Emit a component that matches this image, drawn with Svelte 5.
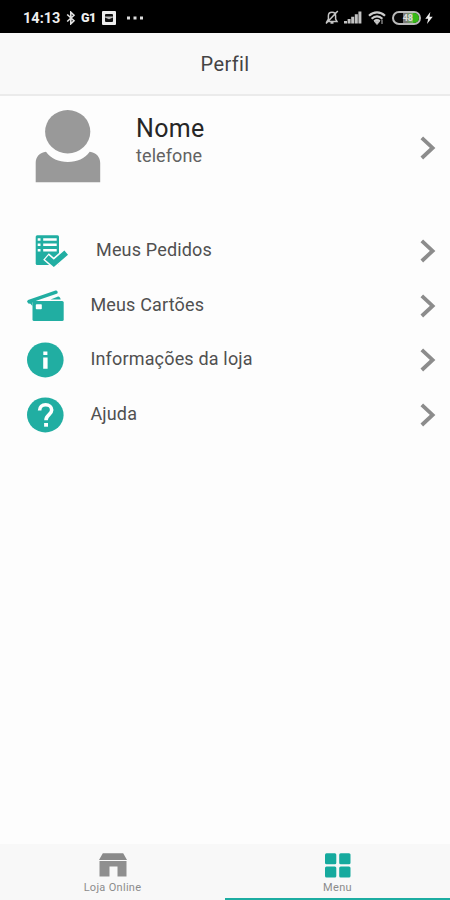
<script>
  const items = [
    { icon: 'orders', label: 'Meus Pedidos' },
    { icon: 'cards', label: 'Meus Cartões' },
    { icon: 'info', label: 'Informações da loja' },
    { icon: 'help', label: 'Ajuda' }
  ];
</script>

{#snippet chevron()}
  <svg class="chevron" width="16" height="24" viewBox="0 0 16 24"><path d="M1.8 1.8 12.6 11.9 1.8 22" fill="none" stroke="#8c8c8c" stroke-width="3.8" /></svg>
{/snippet}

<div class="screen">
  <div class="status">
    <span class="time">14:13</span>
    <svg class="bluetooth" width="10" height="14" viewBox="0 0 10 14"><path d="M1.2 3.5 8 9.7 4.8 12.8V1.2L8 4.3 1.2 10.5" fill="none" stroke="#e2e2e2" stroke-width="1.6" /></svg>
    <span class="gnews">G1</span>
    <svg class="boxed" width="14" height="14" viewBox="0 0 14 14"><rect width="14" height="14" rx="1" fill="#eee" /><rect x="3" y="3" width="8" height="8" rx="1" fill="#111" /><path d="M3 5.5h8v1L7 8.2 3 6.5z" fill="#bbb" /></svg>
    <svg class="dots" width="17" height="4" viewBox="0 0 17 4"><path d="M0 .5h3v3H0zM6.5.5h3v3h-3zM13 .5h3v3h-3z" fill="#ddd" /></svg>
    <div class="system">
      <svg width="14" height="15" viewBox="0 0 14 15"><path d="M2 11.5h10L10.6 9V5.8C10.6 3.5 9 2.2 7 2.2S3.4 3.5 3.4 5.8V9zM5.5 13h3M1 13.5 12.8 1" fill="none" stroke="#c5c5c5" stroke-width="1.5" /></svg>
      <svg class="signal" width="18" height="13" viewBox="0 0 18 13"><path d="M0 10h3v2.5H0zM3.6 8h3v4.5h-3zM7.2 5.7h3v6.8h-3zM10.8 3.2h3v9.3h-3zM14.4.5h3v12h-3z" fill="#c2c2c2" /></svg>
      <svg class="wifi" width="18" height="14" viewBox="0 0 18 14"><path d="M1 4.8C5.8.2 12.2.2 17 4.8M3.6 7.7c3.3-3 7.5-3 10.8 0M6.2 10.3c1.7-1.4 3.9-1.4 5.6 0" fill="none" stroke="#ccc" stroke-width="2.2" /><path d="m6.5 10.5 2.5 3 2.5-3zM14 13V8.5" fill="#ccc" stroke="#bbb" stroke-width="1" /></svg>
      <div class="battery"><span>48</span><i></i></div>
      <svg class="bolt" width="8" height="12" viewBox="0 0 8 12"><path d="M5.3 0 .3 6.7h2.9L2 12l5.7-7.2H4.5z" fill="#eee" /></svg>
    </div>
  </div>

  <header><h1>Perfil</h1></header>

  <main>
    <section class="profile">
      <svg class="avatar" width="66" height="74" viewBox="0 0 66 74"><ellipse cx="32.7" cy="21.7" rx="22.6" ry="21.7" fill="#999" /><path d="M.7 72.2V53c0-6 4-10.5 10.3-11.2C16 48.7 23.5 52 32.9 52S49.7 48.7 54.7 41.8C61 42.5 65.2 47 65.2 53v19.2z" fill="#999" /></svg>
      <div class="who">
        <strong>Nome</strong>
        <span>telefone</span>
      </div>
      {@render chevron()}
    </section>

    <nav class="options">
      {#each items as item}
        <div class="row {item.icon}">
          <svg class="icon" width="43" height="40" viewBox="0 0 43 40">
            {#if item.icon === 'orders'}
              <rect x="10.7" y="4.3" width="23.3" height="29.7" rx="1.5" fill="#21aea2" />
              <path d="M18.2 8.5h13.5M18.2 13.8h13.5M18.2 19.2h13.5M12.7 8.5h2.8M12.7 13.8h2.8M12.7 19.2h2.8" stroke="#fff" stroke-width="2.4" />
              <path d="m21 25.5 7.7 6.7L42 20.8" fill="none" stroke="#fdfdfd" stroke-width="8.6" />
              <path d="m21.8 26.3 7 6L41.2 21.6" fill="none" stroke="#21aea2" stroke-width="5.6" />
            {:else if item.icon === 'cards'}
              <path d="m3 14 27.5-9.5c1.7-.6 3.3 2.3 1.2 3.2L12 14.6l-4.6 2V20l-2-2.2-2.1-.3L2 15.5z" fill="#21aea2" />
              <path d="m25.5 13.4 7-2.7c1.5-.5 2.6.3 3.1 2.7z" fill="#21aea2" />
              <rect x="7.5" y="15" width="31.2" height="20" rx="1.6" fill="#21aea2" />
              <rect x="10.8" y="18.2" width="6" height="5" rx=".8" fill="#fff" />
            {:else if item.icon === 'info'}
              <ellipse cx="20.3" cy="19.9" rx="18.3" ry="17.5" fill="#21aea2" />
              <path d="M18.3 11.4h4.1v3.6h-4.1zM18.2 17.5h4.4v11.3h-4.4z" fill="#fff" />
            {:else}
              <ellipse cx="20.3" cy="19.9" rx="18.3" ry="17.5" fill="#21aea2" />
              <path d="M14.6 15.6c0-3.5 2.5-5.8 6-5.8 3.6 0 6.1 2.2 6.1 5.2 0 4.7-5.7 4.6-5.7 10.2" fill="none" stroke="#fff" stroke-width="3.6" />
              <path d="M19.1 28h3.9v3.7h-3.9z" fill="#fff" />
            {/if}
          </svg>
          <span class="label">{item.label}</span>
          {@render chevron()}
        </div>
      {/each}
    </nav>
  </main>

  <footer>
    <div class="tab">
      <svg width="30" height="26" viewBox="0 0 30 26"><path d="M4.8.2h20.4L29 7H1z" fill="#8a8a8a" /><path d="M1.5 8h27v15.5h-9v-10h-8v10h-10z" fill="#8f8f8f" /></svg>
      <span>Loja Online</span>
    </div>
    <div class="tab active">
      <svg width="30" height="26" viewBox="0 0 30 26"><g fill="#16aa9e"><rect x="2" y=".3" width="11.3" height="11" rx="1.5" /><rect x="16.2" y=".3" width="11.3" height="11" rx="1.5" /><rect x="2" y="13.5" width="11.3" height="11" rx="1.5" /><rect x="16.2" y="13.5" width="11.3" height="11" rx="1.5" /></g></svg>
      <span>Menu</span>
    </div>
  </footer>
</div>

<style>
  :global(body) { margin: 0; }
  .screen { box-sizing: border-box; width: 450px; height: 900px; display: flex; flex-direction: column; background: #fdfdfd; font-family: Roboto, sans-serif; overflow: hidden; }
  .screen svg { display: block; flex: none; }
  .status { height: 32.5px; flex: none; box-sizing: border-box; padding: 3px 17px 0 23px; display: flex; align-items: center; background: #000; color: #eee; }
  .time { width: 43px; padding-top: 2px; font-size: 14.5px; line-height: 17px; font-weight: 700; }
  .gnews { width: 20px; margin-left: 5px; font-size: 12.5px; font-weight: 900; letter-spacing: -.5px; }
  .boxed { margin-left: 1px; }
  .dots { margin-left: 11px; }
  .system { display: flex; align-items: center; margin-left: auto; }
  .signal { margin-left: 5px; }
  .wifi { margin-left: 6px; }
  .battery { box-sizing: border-box; width: 29px; height: 14px; margin-left: 6px; border: 2px solid #bbb; border-radius: 7px; display: flex; align-items: center; justify-content: flex-end; overflow: hidden; background: #080808; }
  .battery span { font-size: 9px; line-height: 10px; font-weight: 700; color: #ddd; background: linear-gradient(90deg, #777 30%, #6bba50); }
  .battery i { width: 6px; height: 10px; background: #35b817; }
  .bolt { margin-left: 4px; }
  header { height: 63px; flex: none; box-sizing: border-box; display: flex; align-items: center; justify-content: center; background: #f9f9f9; border-bottom: 2px solid #ebebeb; }
  h1 { margin: 2px 0 0; font-size: 20px; line-height: 24px; font-weight: 400; letter-spacing: .35px; color: #444; }
  main { flex: 1; min-height: 0; }
  .profile { height: 103px; box-sizing: border-box; padding: 2px 14px 0 35px; display: flex; align-items: center; }
  .avatar { margin-bottom: 3px; }
  .who { display: flex; flex-direction: column; flex: 1; margin: 0 0 15px 35px; }
  .who strong { font-size: 25px; line-height: 29px; font-weight: 400; letter-spacing: .3px; color: #262626; }
  .who span { font-size: 18px; line-height: 25px; letter-spacing: .1px; color: #626262; }
  .options { padding-top: 25.5px; }
  .row { height: 54.5px; box-sizing: border-box; padding: 0 14px 0 25px; display: flex; align-items: center; }
  .label { flex: 1; margin: 0 0 2.5px 22.4px; font-size: 18px; line-height: 24px; letter-spacing: .17px; color: #505050; }
  .orders .label { margin-left: 28px; }
  footer { height: 56px; flex: none; display: flex; background: #f8f8f8; }
  .tab { flex: 1; box-sizing: border-box; padding-top: 9px; display: flex; flex-direction: column; align-items: center; border-bottom: 2px solid transparent; }
  .tab span { font-size: 11px; line-height: 16px; margin-top: 1px; letter-spacing: .3px; color: #8c8c8c; }
  .tab.active { border-bottom-color: #1dada2; }
</style>
